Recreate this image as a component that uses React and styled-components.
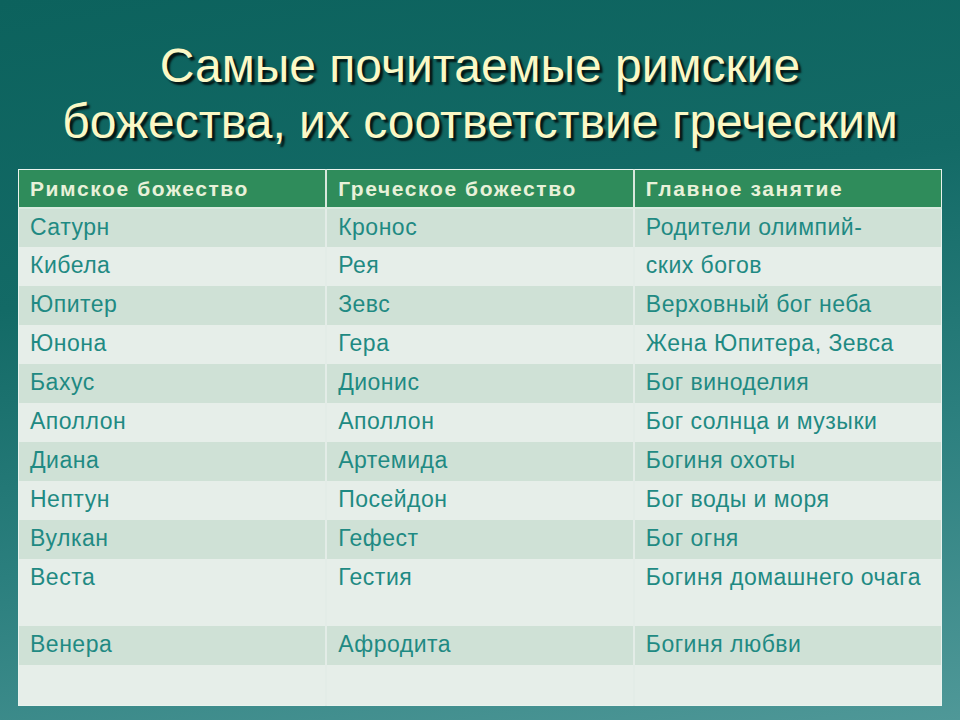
import React from "react";
import styled, { createGlobalStyle } from "styled-components";

const GlobalStyle = createGlobalStyle`
  html, body {
    margin: 0;
    padding: 0;
  }
  body {
    font-family: "Liberation Sans", Arial, sans-serif;
  }
`;

const Slide = styled.div`
  width: 960px;
  height: 720px;
  box-sizing: border-box;
  padding: 38px 18px 0 18px;
  background: linear-gradient(
    170deg,
    #0c625d 0%,
    #136a66 35%,
    #2b7f7e 65%,
    #4f9898 100%
  );
  display: flex;
  flex-direction: column;
  align-items: stretch;
  overflow: hidden;
`;

const Title = styled.h1`
  margin: 0 0 19px;
  font-family: "Liberation Sans", Arial, sans-serif;
  font-weight: normal;
  font-size: 48px;
  line-height: 56px;
  text-align: center;
  color: #fbf8c6;
  text-shadow: 3px 3px 2px rgba(0, 0, 0, 0.8);
`;

const Table = styled.table`
  width: 924px;
  border-collapse: collapse;
  table-layout: fixed;
  border: 1px solid #e9f3ee;
  font-family: "Liberation Sans", Arial, sans-serif;
`;

const HeadCell = styled.th`
  height: 37px;
  padding: 0 11px;
  text-align: left;
  vertical-align: middle;
  background: #2f8c5b;
  color: #e8f1d9;
  font-size: 21px;
  font-weight: bold;
  letter-spacing: 1.6px;
  white-space: nowrap;
  border-right: 2px solid #d7e8dc;
  border-bottom: 2px solid #d9ebdf;
  &:last-child {
    border-right: none;
  }
`;

const Row = styled.tr`
  background: ${(p) => (p.$dark ? "#cfe1d6" : "#e6eee9")};
`;

const Cell = styled.td`
  height: ${(p) => p.$h || 39}px;
  box-sizing: border-box;
  padding: 5px 11px 0;
  vertical-align: top;
  color: #1f8a83;
  font-size: 23px;
  letter-spacing: 0.5px;
  line-height: 26px;
  white-space: nowrap;
  border-right: 2px solid #e3ece7;
  &:last-child {
    border-right: none;
  }
`;

const rows = [
  ["Сатурн", "Кронос", "Родители олимпий-"],
  ["Кибела", "Рея", "ских богов"],
  ["Юпитер", "Зевс", "Верховный бог неба"],
  ["Юнона", "Гера", "Жена Юпитера, Зевса"],
  ["Бахус", "Дионис", "Бог виноделия"],
  ["Аполлон", "Аполлон", "Бог солнца и музыки"],
  ["Диана", "Артемида", "Богиня охоты"],
  ["Нептун", "Посейдон", "Бог воды и моря"],
  ["Вулкан", "Гефест", "Бог огня"],
  ["Веста", "Гестия", "Богиня домашнего очага", 67],
  ["Венера", "Афродита", "Богиня любви"],
  ["", "", "", 40],
];

export default function App() {
  return (
    <>
      <GlobalStyle />
      <Slide>
        <Title>
          Самые почитаемые римские
          <br />
          божества, их соответствие греческим
        </Title>
        <Table>
          <thead>
            <tr>
              <HeadCell>Римское божество</HeadCell>
              <HeadCell>Греческое божество</HeadCell>
              <HeadCell>Главное занятие</HeadCell>
            </tr>
          </thead>
          <tbody>
            {rows.map(([a, b, c, h], i) => (
              <Row key={i} $dark={i % 2 === 0}>
                <Cell $h={h}>{a}</Cell>
                <Cell $h={h}>{b}</Cell>
                <Cell $h={h}>{c}</Cell>
              </Row>
            ))}
          </tbody>
        </Table>
      </Slide>
    </>
  );
}
